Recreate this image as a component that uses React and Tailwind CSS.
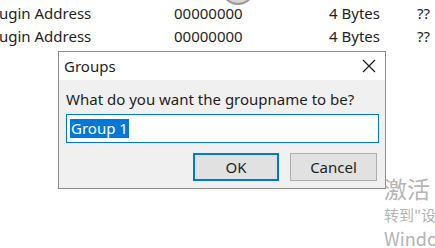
export default function App() {
  const rows = [1, 2];
  return (
    <div className="relative w-[435px] h-[248px] overflow-hidden bg-white font-['Segoe_UI','Noto_Sans',sans-serif] text-[15px] text-[#1e1e1e]">
      {/* background list rows */}
      <div className="pt-[2px]">
        {rows.map(r => (
          <div key={r} className="flex h-[23px] leading-[23px] whitespace-nowrap">
            <div className="w-[175px] -ml-[1px]">ugin Address</div>
            <div className="w-[155px]">00000000</div>
            <div className="w-[88px]">4 Bytes</div>
            <div>??</div>
          </div>
        ))}
      </div>

      {/* dialog */}
      <div className="ml-[58px] mt-[3px] w-[328px] h-[138px] border border-[#8c8c8c] flex flex-col bg-[#f0f0f0]">
        <div className="h-[28px] bg-white flex items-center justify-between pl-[5px] pr-[9px]">
          <span className="leading-none">Groups</span>
          <svg width="14" height="14" viewBox="0 0 14 14">
            <path d="M1 1L13 13M13 1L1 13" stroke="#1e1e1e" strokeWidth="1.2" />
          </svg>
        </div>
        <div className="flex-1 px-[7px] pt-[8px]">
          <div className="h-[22px] leading-[22px] whitespace-nowrap">What do you want the groupname to be?</div>
          <div className="mt-[4px] h-[29px] w-[313px] bg-white border border-[#0078d7] flex items-center px-[3px]">
            <span className="bg-[#0078d7] text-white leading-[19px] px-[1px]">Group 1</span>
          </div>
          <div className="mt-[10px] flex justify-end gap-[11px] pr-[1px]">
            <button className="w-[86px] h-[28px] bg-[#e1e1e1] border-2 border-[#0078d7] text-[15px] leading-none">OK</button>
            <button className="w-[87px] h-[28px] bg-[#e1e1e1] border border-[#adadad] text-[15px] leading-none">Cancel</button>
          </div>
        </div>
      </div>

      {/* busy circle peeking from top */}
      <svg className="absolute left-[218px] top-[-26px]" width="40" height="32" viewBox="0 0 40 32">
        <circle cx="20" cy="14" r="16" fill="#d6d6d6" stroke="#9a9a9a" strokeWidth="2" />
      </svg>

      {/* activation watermark */}
      <div className="absolute left-[384px] top-[174px] text-[#b4b4b4] whitespace-nowrap font-['Segoe_UI','Noto_Sans_CJK_SC',sans-serif]">
        <div className="text-[23px] leading-[28px]">激活</div>
        <div className="text-[15px] leading-[22px] mt-[2px]">转到"设置"</div>
        <div className="text-[18px] leading-[24px]">Windows</div>
      </div>
    </div>
  );
}
